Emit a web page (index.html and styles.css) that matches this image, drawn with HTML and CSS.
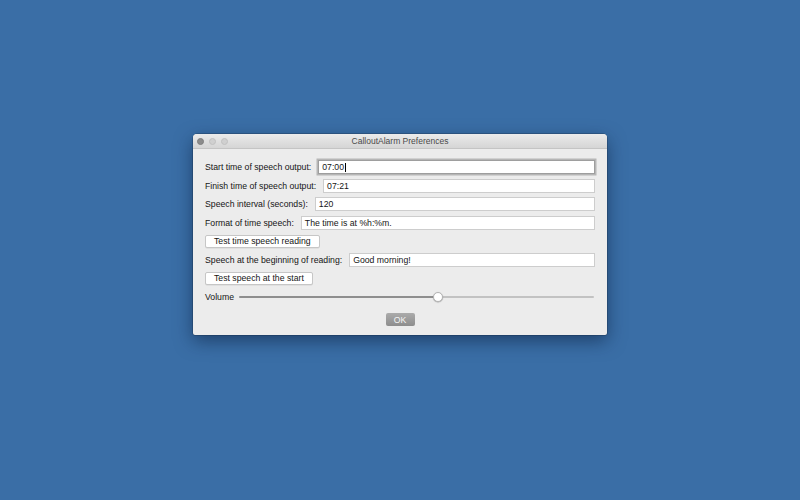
FILE: index.html
```html
<!DOCTYPE html>
<html>
<head>
<meta charset="utf-8">
<link rel="stylesheet" href="styles.css">
</head>
<body>
<div class="window">
  <div class="titlebar">
    <div class="lights"><span class="light dark"></span><span class="light"></span><span class="light"></span></div>
    <div class="title">CalloutAlarm Preferences</div>
  </div>
  <div class="content">
    <div class="row"><span class="label">Start time of speech output:</span><div class="field focus">07:00<span class="caret"></span></div></div>
    <div class="row"><span class="label">Finish time of speech output:</span><div class="field">07:21</div></div>
    <div class="row"><span class="label">Speech interval (seconds):</span><div class="field">120</div></div>
    <div class="row"><span class="label">Format of time speech:</span><div class="field">The time is at %h:%m.</div></div>
    <div class="row"><div class="btn">Test time speech reading</div></div>
    <div class="row"><span class="label">Speech at the beginning of reading:</span><div class="field">Good morning!</div></div>
    <div class="row"><div class="btn">Test speech at the start</div></div>
    <div class="row"><span class="label vol">Volume</span>
      <div class="slider"><div class="fill"></div><div class="rest"></div><div class="thumb"></div></div>
    </div>
    <div class="okrow"><div class="ok">OK</div></div>
  </div>
</div>
</body>
</html>
```
FILE: styles.css
```css
html, body { margin: 0; padding: 0; }
body {
  width: 800px; height: 500px; overflow: hidden;
  background: #3a6ea6;
  font-family: "Liberation Sans", Arial, sans-serif;
  font-size: 8.7px; color: #151515;
}
.window {
  margin: 134px 0 0 193px;
  width: 414px; height: 201px;
  background: #ececec;
  border-radius: 4px 4px 2px 2px;
  box-shadow: 0 6px 18px rgba(10,30,60,0.55), 0 0 0 0.5px rgba(0,0,0,0.35);
  overflow: hidden;
  display: flex; flex-direction: column;
}
.titlebar {
  height: 14px; flex: none;
  background: linear-gradient(#ebebeb, #d5d5d5);
  border-bottom: 1px solid #c4c4c4;
  display: flex; align-items: center;
  position: relative;
}
.lights { display: flex; gap: 5px; padding-left: 4px; }
.light { width: 7px; height: 7px; border-radius: 50%; background: #d0d0d0; border: 0.5px solid #c0c0c0; box-sizing: border-box; }
.light.dark { background: #8c8c8c; border-color: #7e7e7e; }
.title {
  position: absolute; left: 0; right: 0; top: 0; bottom: 0;
  display: flex; align-items: center; justify-content: center;
  color: #4a4a4a; font-size: 8.5px;
}
.content {
  padding: 11px 12px 0 12px;
  display: flex; flex-direction: column; gap: 4.5px;
}
.row { height: 14px; display: flex; align-items: center; gap: 7px; }
.label { white-space: nowrap; }
.field {
  flex: 1; height: 14px; box-sizing: border-box;
  background: #fff; border: 1px solid #cdcdcd;
  padding-left: 3px; display: flex; align-items: center;
  white-space: nowrap;
}
.field.focus { box-shadow: 0 0 0 1.5px #b6b6b6; border-color: #9e9e9e; }
.caret { display: inline-block; width: 1px; height: 9px; background: #000; margin-left: 0.5px; }
.btn {
  height: 13px; box-sizing: border-box;
  background: #fff; border: 1px solid #c6c6c6; border-radius: 2px;
  padding: 0 8px; display: flex; align-items: center;
  box-shadow: 0 0.5px 0 rgba(0,0,0,0.1);
}
.slider { flex: 1; height: 10px; display: flex; align-items: center; position: relative; margin-left: -2px; margin-right: 1px; }
.fill { width: 199px; height: 2px; background: #8e8e8e; border-radius: 1px; }
.rest { flex: 1; height: 2px; background: #c2c2c2; border-radius: 1px; }
.thumb {
  position: absolute; left: 194px; top: 0;
  width: 10px; height: 10px; box-sizing: border-box;
  border-radius: 50%; background: #fff; border: 0.5px solid #b4b4b4;
  box-shadow: 0 0.5px 1px rgba(0,0,0,0.3);
}
.okrow { display: flex; justify-content: center; margin-top: 5px; }
.ok {
  width: 29px; height: 13px; box-sizing: border-box;
  background: linear-gradient(#ababab, #8d8d8d);
  border-radius: 2px; color: #f4f4f4;
  display: flex; align-items: center; justify-content: center;
}
```
